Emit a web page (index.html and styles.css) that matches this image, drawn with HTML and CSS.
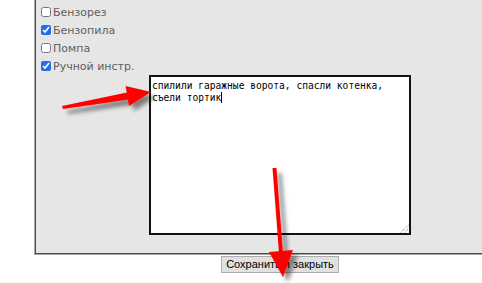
FILE: index.html
```html
<!DOCTYPE html>
<html lang="ru">
<head>
<meta charset="utf-8">
<link rel="stylesheet" href="styles.css">
</head>
<body>
<div class="page">
  <div class="panel">
    <div class="opts">
      <label class="opt"><input type="checkbox"><span>Бензорез</span></label>
      <label class="opt"><input type="checkbox" checked><span>Бензопила</span></label>
      <label class="opt"><input type="checkbox"><span>Помпа</span></label>
      <label class="opt"><input type="checkbox" checked><span>Ручной инстр.</span></label>
    </div>
    <div class="memo">спилили гаражные ворота, спасли котенка,<br>съели тортик<span class="caret"></span><svg class="grip" width="9" height="9" viewBox="0 0 9 9"><path d="M1 8.5 L8.5 1 M4.5 8.5 L8.5 4.5" stroke="#6f6f6f" stroke-width="1" stroke-dasharray="1 1" fill="none"/></svg></div>
  </div>
  <div class="actions"><button class="btn" type="button">Сохранить и закрыть</button></div>
  <svg class="arrows" width="482" height="283" viewBox="0 0 482 283">
    <defs>
      <filter id="sh" x="-20%" y="-20%" width="160%" height="160%">
        <feDropShadow dx="5" dy="5" stdDeviation="2" flood-color="#000" flood-opacity="0.45"/>
      </filter>
    </defs>
    <g filter="url(#sh)" fill="#ff0000">
      <polygon points="62,106 127,92.5 129,99.5 63,109"/>
      <polygon points="151,92 125.6,86 129,106"/>
      <polygon points="272.5,168 276.5,168 283,253 279,253"/>
      <polygon points="283,277 269,252 293,250"/>
    </g>
  </svg>
</div>
</body>
</html>
```
FILE: styles.css
```css
html, body {
  margin: 0;
  padding: 0;
  background: #fff;
  overflow: hidden;
}
.page {
  position: relative;
  width: 482px;
  height: 283px;
  overflow: hidden;
}
.panel {
  box-sizing: border-box;
  width: 492px;
  margin-left: 34px;
  background: #e6e6e6;
  border: 1px solid #a8a8a8;
  border-top: none;
  box-shadow: inset 1px 0 0 #4a4a4a, inset 0 -1px 0 #4a4a4a;
  padding: 3px 6px 19px;
}
.opts {
  display: flex;
  flex-direction: column;
}
.opt {
  display: flex;
  align-items: center;
  gap: 2px;
  height: 18px;
  font-family: "DejaVu Sans", Verdana, sans-serif;
  font-size: 11px;
  color: #5e5e5e;
}
.opt input {
  width: 10px;
  height: 10px;
  margin: 0;
  accent-color: #1f6fe5;
}
.memo {
  position: relative;
  box-sizing: border-box;
  width: 262px;
  height: 160px;
  margin: 0 auto;
  background: #fff;
  border: 2px solid #111;
  padding: 3px 1px;
  font-family: "DejaVu Sans Mono", "Liberation Mono", monospace;
  font-size: 9.6px;
  line-height: 12px;
  color: #000;
  white-space: nowrap;
}
.caret {
  display: inline-block;
  width: 1px;
  height: 11px;
  background: #000;
  vertical-align: -2px;
}
.grip {
  position: absolute;
  right: 0;
  bottom: 0;
}
.actions {
  width: 492px;
  margin-left: 34px;
  margin-top: 1px;
  display: flex;
  justify-content: center;
}
.btn {
  box-sizing: border-box;
  width: 118px;
  height: 17px;
  padding: 0;
  background: #e1e1e1;
  border: 1px solid #adadad;
  border-radius: 0;
  font-family: "Liberation Sans", Arial, sans-serif;
  font-size: 11px;
  line-height: 15px;
  white-space: nowrap;
  color: #000;
}
.arrows {
  position: absolute;
  left: 0;
  top: 0;
  pointer-events: none;
}
```
